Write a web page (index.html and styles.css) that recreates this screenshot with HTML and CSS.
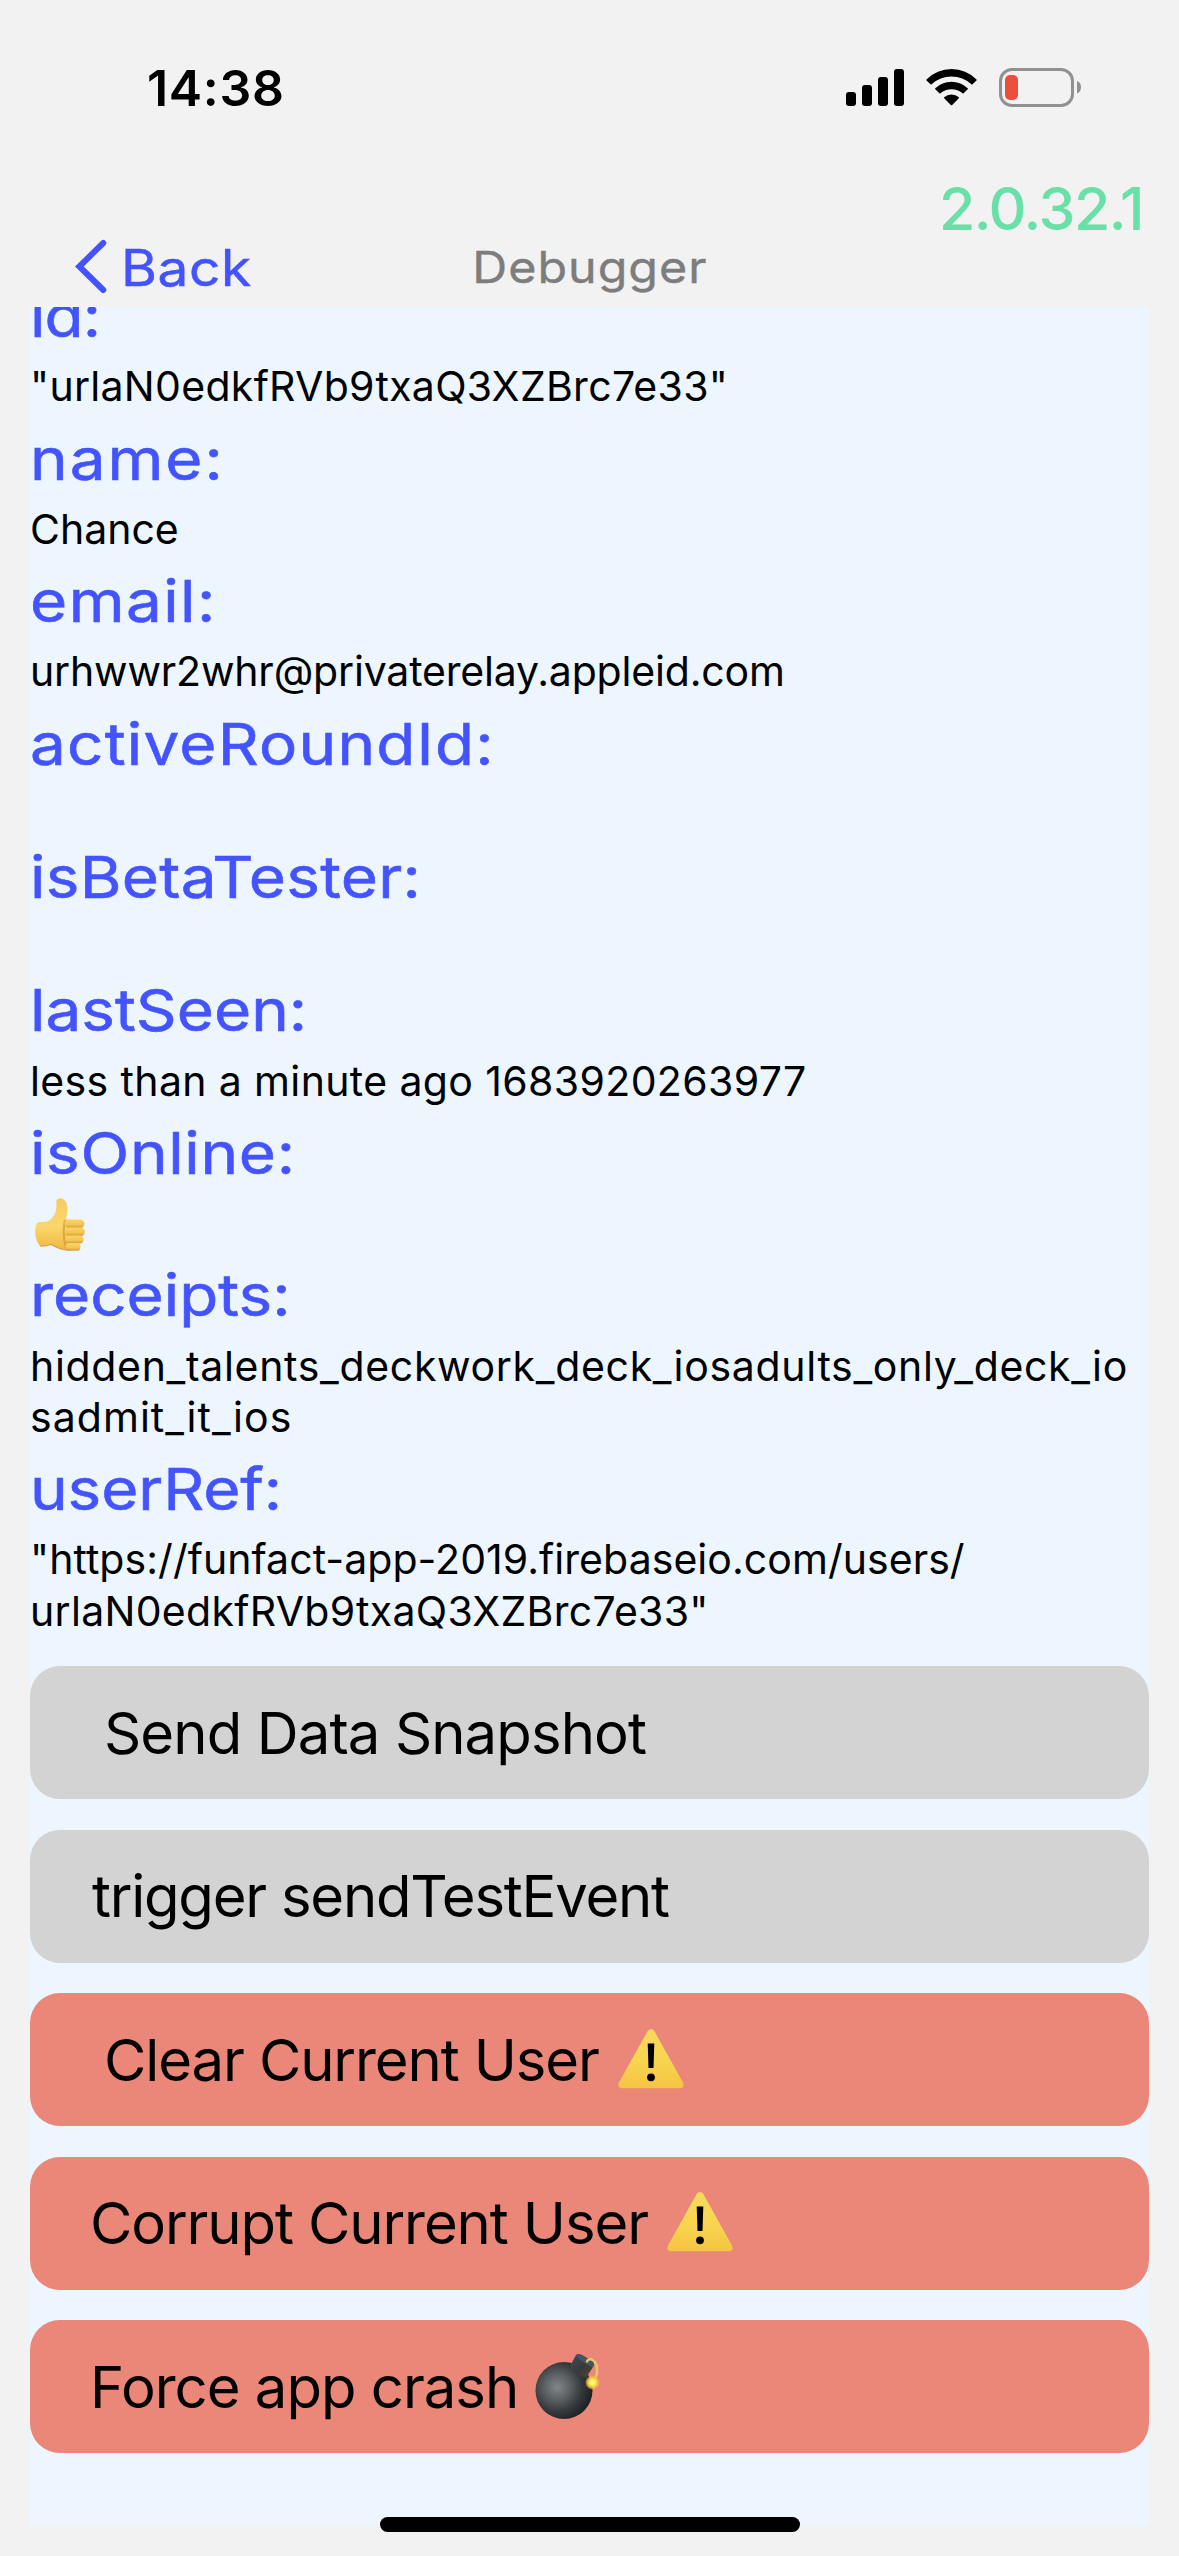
FILE: index.html
```
<!DOCTYPE html>
<html lang="en">
<head>
<meta charset="utf-8">
<title>Debugger</title>
<link rel="stylesheet" href="styles.css">
</head>
<body>
<div class="screen">
  <header class="statusbar">
    <span class="clock">14:38</span>
    <svg class="status-icons" width="240" height="44" viewBox="844 66 240 44">
      <rect x="846" y="92" width="10" height="14" rx="3"/>
      <rect x="862" y="85" width="10" height="21" rx="3"/>
      <rect x="878" y="77" width="10" height="29" rx="3"/>
      <rect x="894" y="69" width="10" height="37" rx="3"/>
      <path d="M926.5 79.5Q937 69 951.5 69Q966 69 976.500 79.500Q977 80 976.500 80.500L972.500 84.300Q972 84.800 971.400 84.300Q963 76.500 951.500 76.500Q940 76.500 931.600 84.300Q931 84.800 930.500 84.300L926.500 80.500Q926 80 926.500 79.500Z"/>
      <path d="M935.300 88.300Q942 81.800 951.500 81.800Q961 81.800 967.700 88.300Q968.200 88.800 967.700 89.300L963.600 93.200Q963 93.700 962.500 93.200Q957.800 89.200 951.500 89.200Q945.200 89.200 940.500 93.200Q940 93.700 939.400 93.200L935.300 89.300Q934.800 88.800 935.300 88.300Z"/>
      <path d="M944.200 97.200Q947.200 94.600 951.500 94.600Q955.800 94.600 958.800 97.200Q959.300 97.700 958.800 98.200L952.200 105Q951.500 105.700 950.800 105L944.200 98.200Q943.700 97.700 944.200 97.200Z"/>
      <rect x="1000.500" y="69.500" width="72" height="36" rx="11.500" fill="none" stroke="#919191" stroke-width="3"/>
      <rect x="1005" y="75" width="13" height="25" rx="5" fill="#eb4e3d"/>
      <path d="M1077 81Q1081 82.500 1081 87.300Q1081 92 1077 93.500Z" fill="#919191"/>
    </svg>
  </header>

  <div class="version">2.0.32.1</div>

  <nav class="navbar">
    <a class="back">
      <svg width="32" height="56" viewBox="75 239 32 56"><path d="M103.300 243L79.300 266.500L103.300 290" fill="none" stroke="#4353ff" stroke-width="6" stroke-linecap="round"/></svg>
      <span class="back-label">Back</span>
    </a>
    <h1 class="title">Debugger</h1>
  </nav>

  <main class="scroller">
    <dl class="fields">
      <dt class="id">id:</dt><dd class="code">"urlaN0edkfRVb9txaQ3XZBrc7e33"</dd>
      <dt class="name">name:</dt><dd>Chance</dd>
      <dt class="email">email:</dt><dd class="address">urhwwr2whr@privaterelay.appleid.com</dd>
      <dt class="round">activeRoundId:</dt><dd class="empty"></dd>
      <dt class="beta">isBetaTester:</dt><dd class="empty"></dd>
      <dt class="seen">lastSeen:</dt><dd class="time">less than a minute ago 1683920263977</dd>
      <dt class="online">isOnline:</dt>
      <dd class="thumb">
        <svg width="54" height="58" viewBox="33 1195 54 58" role="img" aria-label="Yes">
          <defs>
            <linearGradient id="skin" x1="0" y1="0" x2="0" y2="1"><stop offset="0" stop-color="#f4cd62"/><stop offset=".55" stop-color="#fad66d"/><stop offset="1" stop-color="#efb840"/></linearGradient>
            <linearGradient id="finger" x1="0" y1="0" x2="0" y2="1"><stop offset="0" stop-color="#f8d56c"/><stop offset=".6" stop-color="#f3c553"/><stop offset="1" stop-color="#d99a31"/></linearGradient>
          </defs>
          <path d="M37 1222Q39 1220.500 43 1221Q49 1221 52 1217Q57 1211 56.500 1204Q55 1197.500 60 1197.200Q66 1197 67.500 1206Q68 1212 66 1218L72 1219V1248Q64 1250.500 56 1246L51 1243.500Q46 1245.500 40 1245Q35.500 1240 35.200 1231Q35.200 1225 37 1222Z" fill="url(#skin)"/>
          <path d="M40 1245Q46 1245.500 51 1243.500L57 1246.500Q63 1249.500 70 1249" fill="none" stroke="#cf8c2d" stroke-width="1.200" opacity=".75"/>
          <path d="M65 1219Q62 1231 66 1247" fill="none" stroke="#cd902f" stroke-width="2.200" opacity=".6"/>
          <rect x="64.500" y="1218.500" width="20" height="8.500" rx="4.200" fill="url(#finger)"/>
          <rect x="64.500" y="1226.500" width="20.500" height="8.500" rx="4.200" fill="url(#finger)"/>
          <rect x="65" y="1234.500" width="18.500" height="8" rx="4" fill="url(#finger)"/>
          <rect x="65.500" y="1242" width="15" height="7.800" rx="3.900" fill="url(#finger)"/>
        </svg>
      </dd>
      <dt class="receipts">receipts:</dt><dd class="receipt-list">hidden_talents_deckwork_deck_iosadults_only_deck_io<br><span class="receipt-rest">sadmit_it_ios</span></dd>
      <dt class="ref">userRef:</dt><dd class="url">"https://funfact-app-2019.firebaseio.com/users/<br><span class="code">urlaN0edkfRVb9txaQ3XZBrc7e33"</span></dd>
    </dl>

    <div class="actions">
      <button class="action indented snapshot">Send Data Snapshot</button>
      <button class="action trigger">trigger sendTestEvent</button>
      <button class="action danger indented clear">Clear Current User
        <svg class="warning" width="68" height="62" viewBox="0 0 68 62" role="img" aria-label="Warning">
          <defs><linearGradient id="amber" x1="0" y1="0" x2="0" y2="1"><stop offset="0" stop-color="#f8d95d"/><stop offset=".55" stop-color="#f7d54f"/><stop offset="1" stop-color="#f5c443"/></linearGradient></defs>
          <path d="M30.800 2.800Q34 -1 37.200 2.800L66 54.500Q68 59.500 63.500 60.300H4.500Q0 59.500 2 54.500Z" fill="url(#amber)"/>
          <path d="M30.700 15.500H37.300L36.500 40H31.500Z"/><circle cx="34" cy="49.300" r="3.900"/>
        </svg>
      </button>
      <button class="action danger corrupt">Corrupt Current User
        <svg class="warning" width="68" height="62" viewBox="0 0 68 62" role="img" aria-label="Warning">
          <path d="M30.800 2.800Q34 -1 37.200 2.800L66 54.500Q68 59.500 63.500 60.300H4.500Q0 59.500 2 54.500Z" fill="url(#amber)"/>
          <path d="M30.700 15.500H37.300L36.500 40H31.500Z"/><circle cx="34" cy="49.300" r="3.900"/>
        </svg>
      </button>
      <button class="action danger crash">Force app crash
        <svg class="bomb" width="68" height="68" viewBox="533 2352 68 68" role="img" aria-label="Bomb">
          <defs>
            <radialGradient id="shell" cx=".38" cy=".44" r=".62"><stop offset="0" stop-color="#82868a"/><stop offset=".35" stop-color="#5d6265"/><stop offset=".7" stop-color="#35393d"/><stop offset="1" stop-color="#1d2023"/></radialGradient>
            <linearGradient id="neck" x1="0" y1="0" x2="1" y2="1"><stop offset="0" stop-color="#42505c"/><stop offset=".55" stop-color="#36393b"/><stop offset="1" stop-color="#5b4a20"/></linearGradient>
            <radialGradient id="spark"><stop offset="0" stop-color="#fffb9a"/><stop offset=".45" stop-color="#fbe84a"/><stop offset=".75" stop-color="#f7bd3c" stop-opacity=".8"/><stop offset="1" stop-color="#f7b050" stop-opacity="0"/></radialGradient>
          </defs>
          <circle cx="564" cy="2390.500" r="28.500" fill="url(#shell)"/>
          <path d="M570 2366L576 2355Q578 2353 582 2355L592 2361Q595 2364 593 2367L586 2378Q576 2375 570 2366Z" fill="url(#neck)"/>
          <path d="M576 2355Q579 2353.500 583 2356L592 2361Q595 2364 593 2367Q581 2363 576 2355Z" fill="#465563"/>
          <path d="M587 2362.500Q587 2358.500 592 2359.500Q598 2363 597 2372Q596.500 2378 593 2382" fill="none" stroke="#e9c66b" stroke-width="2.400"/>
          <circle cx="592.500" cy="2382.500" r="7.500" fill="url(#spark)"/>
        </svg>
      </button>
    </div>
  </main>
  <div class="home-indicator"></div>
</div>
</body>
</html>
```
FILE: styles.css
```
* { box-sizing: border-box; }

body {
  margin: 0;
  background: #f2f2f2;
  color: #000;
  font-family: Inter, "Liberation Sans", sans-serif;
}

.screen {
  position: relative;
  width: 1179px;
  height: 2556px;
  overflow: hidden;
}

/* status bar */
.statusbar {
  display: flex;
  justify-content: space-between;
  align-items: flex-start;
  height: 173px;
  padding: 66px 95px 0 147px;
}
.clock {
  font-size: 50px;
  font-weight: 600;
  line-height: 44px;
  letter-spacing: 0.7px;
}
.status-icons { display: block; }

/* header */
.version {
  height: 67px;
  padding-right: 36px;
  color: #69e0a8;
  font-size: 59px;
  font-weight: 500;
  line-height: 71px;
  letter-spacing: -1.5px;
  text-align: right;
}
.navbar {
  display: grid;
  grid-template-columns: 1fr auto 1fr;
  align-items: start;
  height: 67px;
}
.back {
  display: flex;
  gap: 14px;
  padding-left: 75px;
  color: #4353ff;
}
.back svg { display: block; margin-top: -1px; }
.back-label {
  font-size: 50px;
  font-weight: 400;
  line-height: 56px;
  letter-spacing: 0.5px;
  -webkit-text-stroke: 0.5px;
  transform: scaleX(1.1);
  transform-origin: left;
}
.title {
  margin: 0;
  color: #7d7d7d;
  font-size: 44px;
  font-weight: 400;
  line-height: 54px;
  letter-spacing: 0.9px;
  -webkit-text-stroke: 0.4px;
  transform: scaleX(1.1);
}

/* scrolling content */
.scroller {
  height: 2219px;
  margin: 0 30px;
  overflow: hidden;
  background: #edf5ff;
}
.fields { margin: -27px 0 0; }
dt {
  width: max-content;
  height: 73.300px;
  margin-bottom: 8px;
  color: #4353ff;
  font-size: 58px;
  font-weight: 400;
  line-height: 73.300px;
  -webkit-text-stroke: 0.6px;
  transform: scaleX(1.1);
  transform-origin: left;
}
.id { letter-spacing: -0.8px; }
.name { letter-spacing: 1.8px; }
.email { letter-spacing: 1.3px; }
.round { letter-spacing: 1.1px; }
.beta { letter-spacing: 0.25px; }
.seen { letter-spacing: 0; }
.online { letter-spacing: 0.6px; }
.receipts { letter-spacing: 0; }
.ref { letter-spacing: -0.1px; }
dd {
  min-height: 51px;
  margin: 0 0 10px;
  font-size: 41px;
  line-height: 51.300px;
  white-space: nowrap;
}
dd.empty { min-height: 42px; }
.code { letter-spacing: 0.3px; }
.time { letter-spacing: 0.37px; }
.address { letter-spacing: -0.17px; }
.receipt-list { letter-spacing: 0.68px; }
.receipt-rest { letter-spacing: 1.05px; }
.url { letter-spacing: 0.05px; }
.thumb { display: flow-root; height: 51px; }
.thumb svg { display: block; margin: -2px 0 0 3px; }

/* buttons */
.actions {
  display: flex;
  flex-direction: column;
  gap: 30.500px;
  padding-top: 19px;
}
.action {
  display: flex;
  align-items: center;
  height: 133px;
  padding: 0 60px;
  border: 0;
  border-radius: 30px;
  background: #d3d3d3;
  color: #000;
  font: 400 58px/72px Inter, "Liberation Sans", sans-serif;
  letter-spacing: -1.1px;
}
.indented { padding-left: 74px; }
.danger { background: #ea8778; }
.snapshot { letter-spacing: -0.88px; }
.trigger { padding-left: 62px; letter-spacing: -1.240px; }
.crash { letter-spacing: -1px; }
.warning { margin-left: 18px; margin-bottom: 2px; }
.bomb { margin-left: 15px; margin-bottom: 1px; }

.home-indicator {
  position: absolute;
  bottom: 24px;
  left: 380px;
  width: 420px;
  height: 15px;
  border-radius: 7.500px;
  background: #000;
}
```
